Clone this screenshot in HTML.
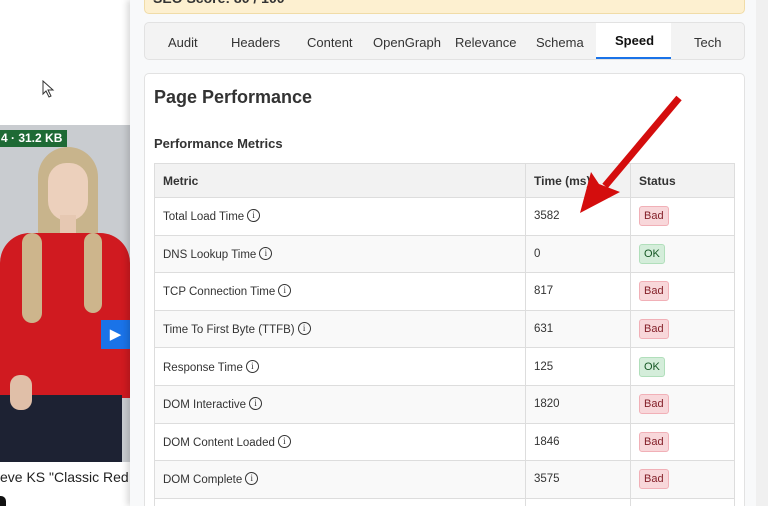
<!DOCTYPE html>
<html><head><style>
*{margin:0;padding:0;box-sizing:border-box}
html{width:768px;height:506px;overflow:hidden}
body{width:768px;height:506px;overflow:hidden;background:#fff;font-family:"Liberation Sans",sans-serif;position:relative}
.abs{position:absolute}
.panel{left:130px;top:0;width:626px;height:506px;background:#f8f9fa;box-shadow:-3px 0 6px rgba(0,0,0,.15)}
.sb{left:756px;top:0;width:12px;height:506px;background:#f0f0f0}
.banner{left:144px;top:-6px;width:601px;height:20px;background:#fdf0d0;border:1px solid #f0dca8;border-radius:5px;overflow:hidden}
.tabs{left:144px;top:22px;width:601px;height:38px;background:#f3f3f3;border:1px solid #e2e2e2;border-radius:5px}
.tab{position:absolute;top:12px;font-size:13px;color:#333}
.card{left:144px;top:73px;width:601px;height:433px;background:#fff;border:1px solid #e2e2e2;border-bottom:none;border-radius:5px 5px 0 0}
table{position:absolute;left:154px;top:163px;width:581px;border-collapse:collapse;font-size:11.5px;color:#333}
td,th{border:1px solid #ddd;padding:0 8px;text-align:left;height:37.6px;vertical-align:middle}
th{background:#f2f2f2;font-size:12px;height:34px}
tr td{background:#fff}
tr:nth-child(odd) td{background:#f9f9f9}
.i{display:inline-block;width:13px;height:13px;border:1px solid #333;border-radius:50%;font-size:9px;text-align:center;line-height:11px;margin-left:3px;vertical-align:2px;font-family:"Liberation Serif",serif}
.bad,.ok{display:inline-block;padding:3px 4px;border-radius:3px;font-size:11px}
.bad{background:#f8d7da;border:1px solid #f1b0b7;color:#842029}
.ok{background:#d4edda;border:1px solid #b1dfbb;color:#155724}
</style></head><body>
<div class="abs" style="left:0;top:125px;width:130px;height:337px;background:#c9ccd0;overflow:hidden">
<div class="abs" style="left:38px;top:22px;width:60px;height:170px;background:#c8b48c;border-radius:30px 30px 20px 20px"></div>
<div class="abs" style="left:48px;top:38px;width:40px;height:58px;background:#ecd0bc;border-radius:20px 20px 22px 22px"></div>
<div class="abs" style="left:60px;top:90px;width:16px;height:26px;background:#e6c8b2"></div>
<div class="abs" style="left:0;top:108px;width:130px;height:165px;background:#d01a20;border-radius:30px 30px 0 0"></div>
<div class="abs" style="left:22px;top:108px;width:20px;height:90px;background:#cdb58c;border-radius:10px"></div>
<div class="abs" style="left:84px;top:108px;width:18px;height:80px;background:#cdb58c;border-radius:10px"></div>
<div class="abs" style="left:0;top:270px;width:122px;height:70px;background:#1d2233"></div>
<div class="abs" style="left:10px;top:250px;width:22px;height:35px;background:#e0bfa8;border-radius:10px"></div>
</div>
<div class="abs" style="left:0;top:130px;width:67px;height:17px;background:#1e6a35;color:#fff;font-size:12px;font-weight:bold;padding-left:1px;line-height:17px">4 · 31.2 KB</div>
<div class="abs" style="left:101px;top:320px;width:29px;height:29px;background:#1a73e8;color:#fff;font-size:15px;text-align:center;line-height:29px">▶</div>
<div class="abs" style="left:0;top:469px;font-size:14px;color:#222;white-space:nowrap">eve KS "Classic Red</div>
<div class="abs" style="left:0;top:496px;width:6px;height:10px;background:#111;border-radius:0 5px 0 0"></div>
<svg class="abs" style="left:42px;top:80px" width="14" height="18"><path d="M1 1 L1 14 L4 11 L7 17 L9 16 L6 10 L11 10 Z" fill="#fff" stroke="#333"/></svg>
<div class="abs panel"></div>
<div class="abs sb"></div>
<div class="abs banner"><span style="position:absolute;left:8px;top:-5px;font-size:14px;font-weight:bold;color:#333">SEO Score: 80 / 100</span></div>
<div class="abs tabs">
<span class="tab" style="left:23px">Audit</span>
<span class="tab" style="left:86px">Headers</span>
<span class="tab" style="left:162px">Content</span>
<span class="tab" style="left:228px">OpenGraph</span>
<span class="tab" style="left:310px">Relevance</span>
<span class="tab" style="left:391px">Schema</span>
<div class="abs" style="left:451px;top:0;width:75px;height:36px;background:#fff;border-bottom:2px solid #1a73e8"></div>
<span class="tab" style="left:470px;top:10px;font-weight:bold;color:#111">Speed</span>
<span class="tab" style="left:549px">Tech</span>
</div>
<div class="abs card"></div>
<div class="abs" style="left:154px;top:87px;font-size:18px;font-weight:bold;color:#333">Page Performance</div>
<div class="abs" style="left:154px;top:136px;font-size:13px;font-weight:bold;color:#333">Performance Metrics</div>
<div class="abs" style="left:154px;top:163px;width:581px;height:343px;overflow:hidden">
<table style="left:0;top:0">
<tr><th style="width:371px">Metric</th><th style="width:105px">Time (ms)</th><th>Status</th></tr>
<tr><td>Total Load Time<span class="i">i</span></td><td>3582</td><td><span class="bad">Bad</span></td></tr>
<tr><td>DNS Lookup Time<span class="i">i</span></td><td>0</td><td><span class="ok">OK</span></td></tr>
<tr><td>TCP Connection Time<span class="i">i</span></td><td>817</td><td><span class="bad">Bad</span></td></tr>
<tr><td>Time To First Byte (TTFB)<span class="i">i</span></td><td>631</td><td><span class="bad">Bad</span></td></tr>
<tr><td>Response Time<span class="i">i</span></td><td>125</td><td><span class="ok">OK</span></td></tr>
<tr><td>DOM Interactive<span class="i">i</span></td><td>1820</td><td><span class="bad">Bad</span></td></tr>
<tr><td>DOM Content Loaded<span class="i">i</span></td><td>1846</td><td><span class="bad">Bad</span></td></tr>
<tr><td>DOM Complete<span class="i">i</span></td><td>3575</td><td><span class="bad">Bad</span></td></tr>
<tr><td>&nbsp;</td><td></td><td></td></tr>
</table>
</div>
<svg class="abs" style="left:0;top:0" width="768" height="506"><line x1="679" y1="98" x2="605" y2="186" stroke="#d40d0d" stroke-width="7"/><path d="M580 213 L591 172 L599 184 L620 192 Z" fill="#d40d0d"/></svg>
</body></html>
